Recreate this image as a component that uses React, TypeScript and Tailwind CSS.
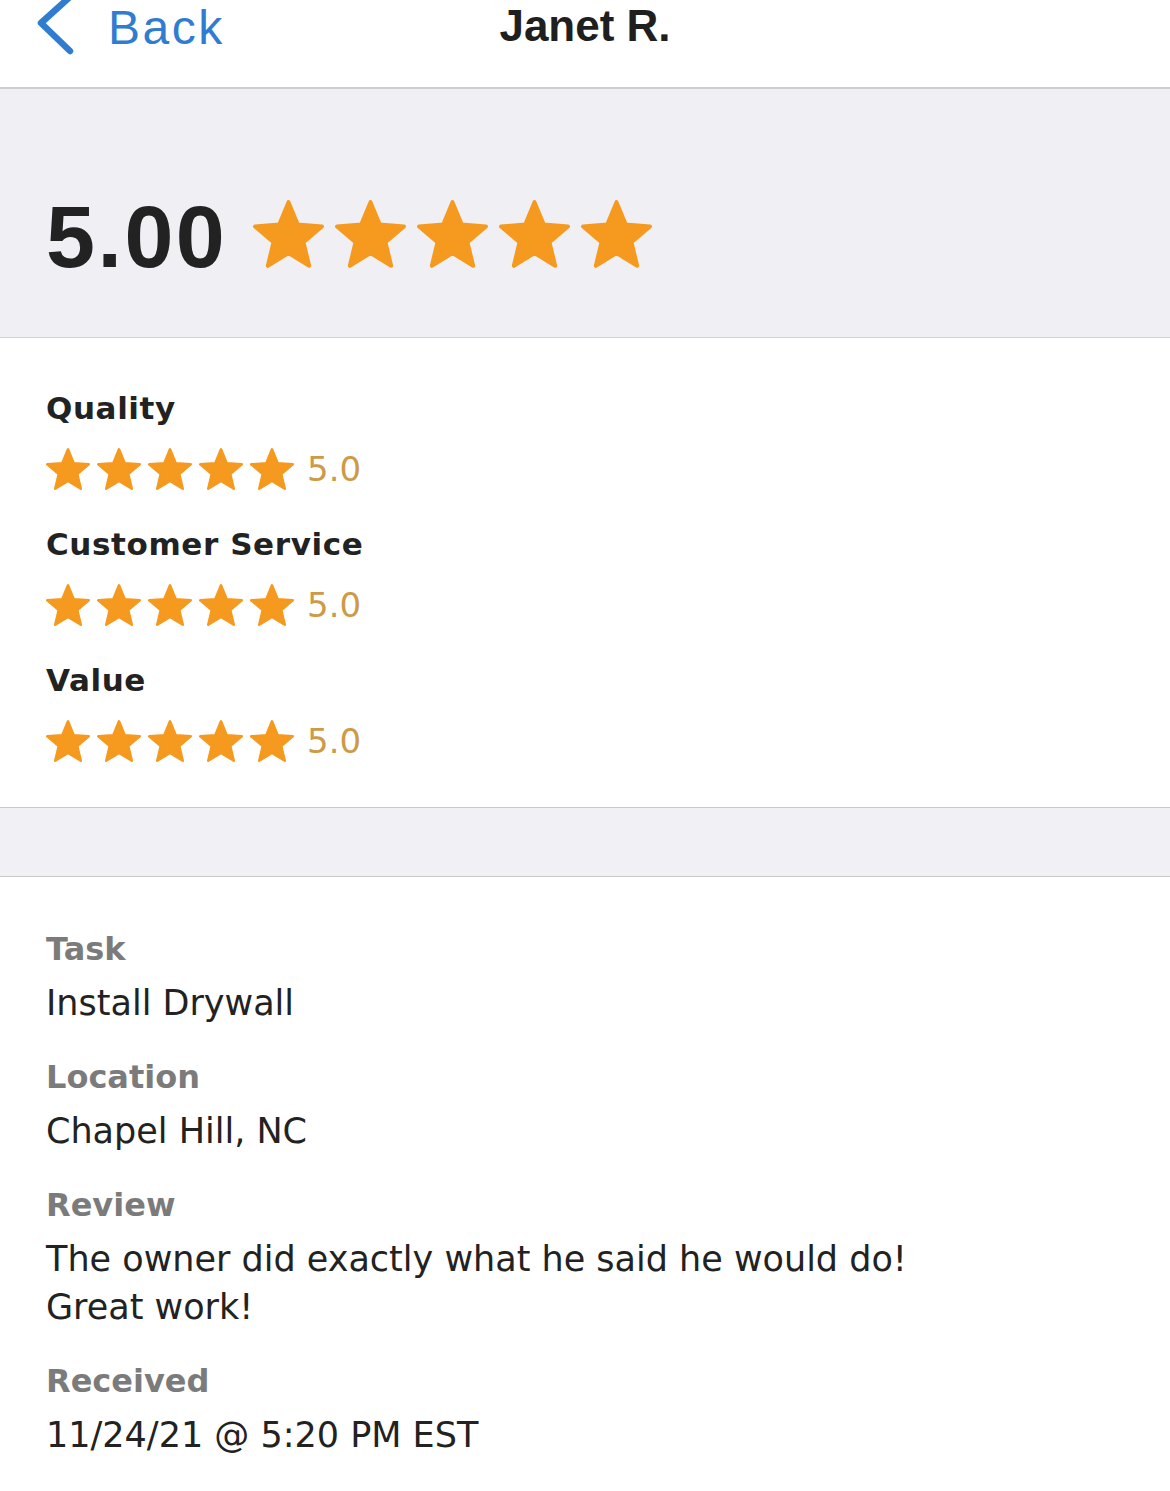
const STAR_POINTS =
  "12,2 14.76,8.7 21.99,9.26 16.47,13.95 18.17,21 12,17.2 5.83,21 7.53,13.95 2.01,9.26 9.24,8.7";

const Star = ({ className }: { className: string }) => (
  <svg viewBox="1.4 1.4 21.2 20.2" className={className}>
    <polygon
      points={STAR_POINTS}
      fill="#f5991f"
      stroke="#f5991f"
      strokeWidth="1.2"
      strokeLinejoin="round"
    />
  </svg>
);

const ratings = [
  { name: "Quality", score: "5.0" },
  { name: "Customer Service", score: "5.0" },
  { name: "Value", score: "5.0" },
];

const details = [
  { label: "Task", value: ["Install Drywall"] },
  { label: "Location", value: ["Chapel Hill, NC"] },
  { label: "Review", value: ["The owner did exactly what he said he would do!", "Great work!"] },
  { label: "Received", value: ["11/24/21 @ 5:20 PM EST"] },
];

export default function App() {
  return (
    <div className="w-[1170px] min-h-[1491px] bg-white overflow-hidden">
      {/* nav bar */}
      <header className="grid h-[89px] grid-cols-[1fr_auto_1fr] items-start border-b-2 border-[#cdcdd1] bg-white">
        <div className="flex items-start">
          <svg viewBox="0 0 44 64" className="ml-[34px] mt-[-8px] h-[64px] w-[44px]">
            <polyline
              points="38,3 7,31 36,59"
              fill="none"
              stroke="#2f7cd1"
              strokeWidth="6.5"
              strokeLinecap="round"
              strokeLinejoin="round"
            />
          </svg>
          <span className="ml-[30px] mt-[4px] text-[48px] leading-[48px] tracking-[2.5px] text-[#2f7cd1] [font-family:'Liberation_Sans',Arial,sans-serif]">
            Back
          </span>
        </div>
        <h1 className="mt-[4px] text-[44px] font-bold leading-[44px] text-[#1f1f1f] [font-family:'Liberation_Sans',Arial,sans-serif]">
          Janet R.
        </h1>
        <div />
      </header>

      {/* overall score */}
      <section className="flex h-[249px] items-start border-b border-[#d3d3d7] bg-[#f0f0f4] pl-[46px] pt-[104px]">
        <span className="text-[88px] font-bold leading-[88px] tracking-[2.5px] text-[#222] [font-family:'Liberation_Sans',Arial,sans-serif]">
          5.00
        </span>
        <div className="ml-[26px] mt-[7px] flex gap-[11px]">
          {[0, 1, 2, 3, 4].map((i) => (
            <Star key={i} className="h-[68px] w-[71px]" />
          ))}
        </div>
      </section>

      {/* category ratings */}
      <section className="flex flex-col gap-[33px] bg-white pb-[44px] pl-[46px] pt-[50px] [font-family:'DejaVu_Sans',sans-serif]">
        {ratings.map((r) => (
          <div key={r.name}>
            <h2 className="text-[31px] font-bold leading-[40px] tracking-[0.6px] text-[#222]">{r.name}</h2>
            <div className="mt-[19px] flex h-[44px] items-center">
              <div className="flex gap-[7px]">
                {[0, 1, 2, 3, 4].map((i) => (
                  <Star key={i} className="h-[42px] w-[44px]" />
                ))}
              </div>
              <span className="ml-[13px] text-[34px] leading-[44px] text-[#cd9a48]">{r.score}</span>
            </div>
          </div>
        ))}
      </section>

      {/* spacer band */}
      <div className="h-[70px] border-y border-[#c9c9cd] bg-[#f1f0f5]" />

      {/* review details */}
      <section className="flex flex-col gap-[30px] bg-white pl-[46px] pt-[52px] [font-family:'DejaVu_Sans',sans-serif]">
        {details.map((d) => (
          <div key={d.label}>
            <div className="text-[32px] font-bold leading-[40px] text-[#7b7b7b]">{d.label}</div>
            <div className="mt-[10px] text-[35px] leading-[48px] text-[#222]">
              {d.value.map((line) => (
                <div key={line}>{line}</div>
              ))}
            </div>
          </div>
        ))}
      </section>
    </div>
  );
}
